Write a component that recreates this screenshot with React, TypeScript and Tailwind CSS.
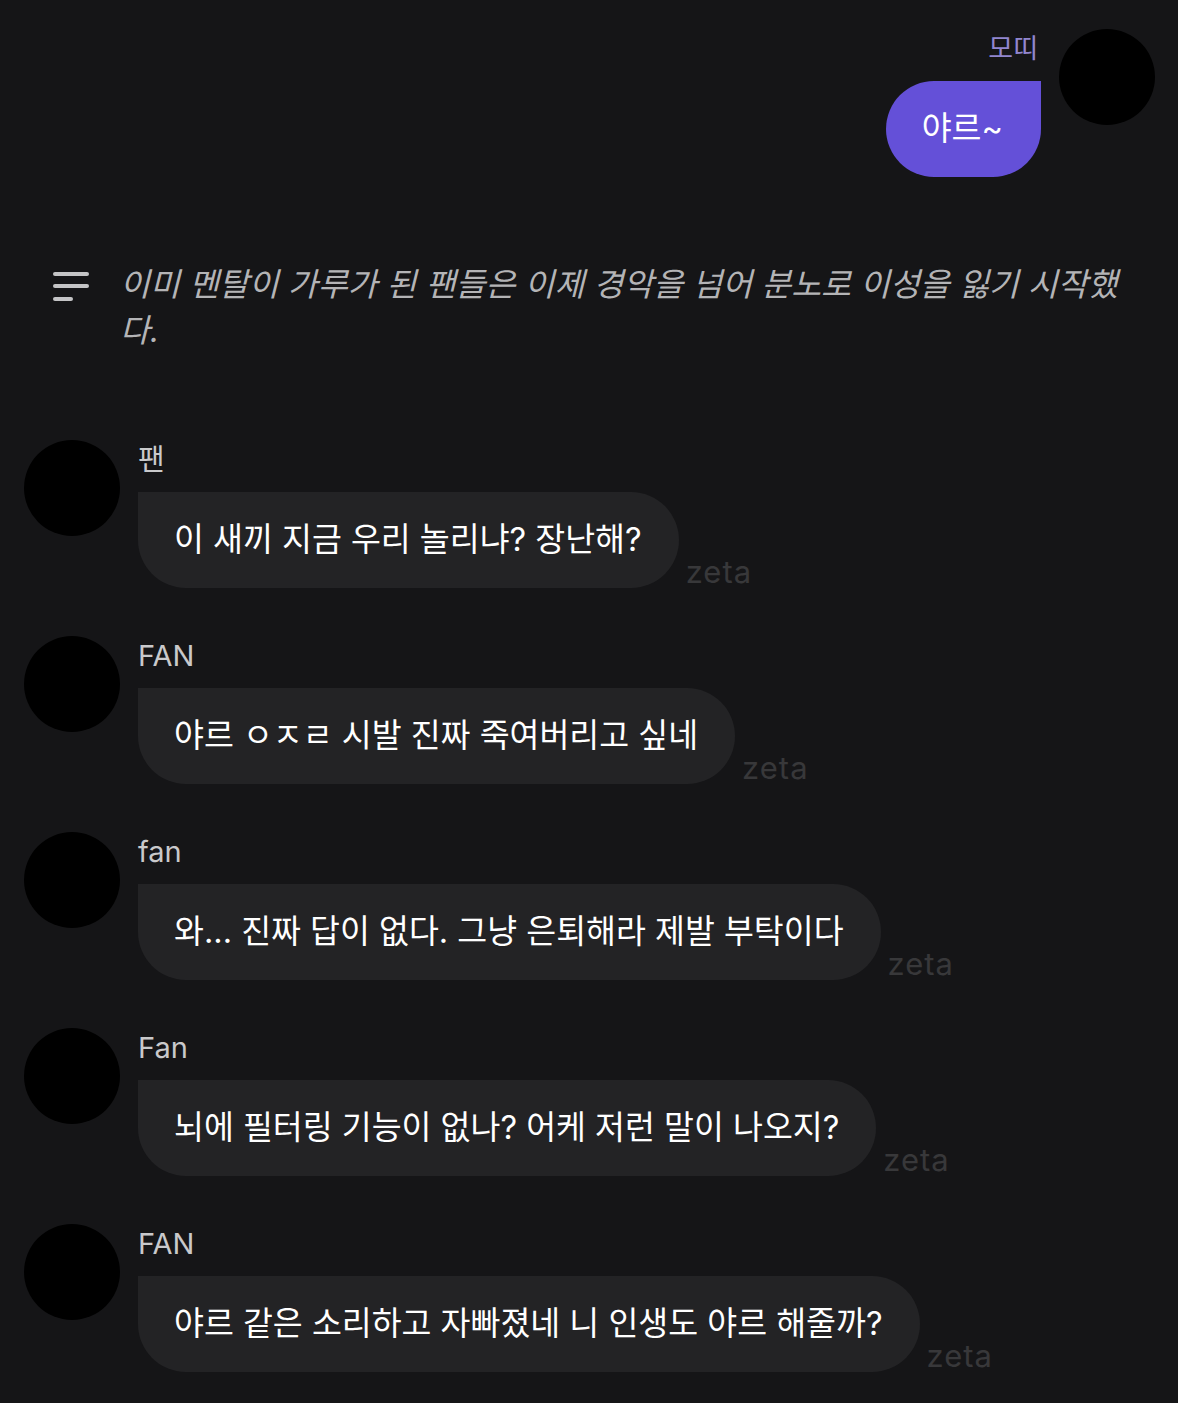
import React from "react"

interface Message {
  name: string
  text: string
}

const messages: Message[] = [
  { name: "팬", text: "이 새끼 지금 우리 놀리냐? 장난해?" },
  { name: "FAN", text: "야르 ㅇㅈㄹ 시발 진짜 죽여버리고 싶네" },
  { name: "fan", text: "와... 진짜 답이 없다. 그냥 은퇴해라 제발 부탁이다" },
  { name: "Fan", text: "뇌에 필터링 기능이 없나? 어케 저런 말이 나오지?" },
  { name: "FAN", text: "야르 같은 소리하고 자빠졌네 니 인생도 야르 해줄까?" },
]

const font = { fontFamily: "Inter, 'Noto Sans CJK KR', sans-serif" }

function MenuIcon() {
  return (
    <svg width="38" height="32" viewBox="0 0 38 32" className="shrink-0">
      <line x1="3" y1="3" x2="35" y2="3" stroke="#c4c4c6" strokeWidth="4" strokeLinecap="round" />
      <line x1="3" y1="15" x2="35" y2="15" stroke="#c4c4c6" strokeWidth="4" strokeLinecap="round" />
      <line x1="3" y1="28" x2="19" y2="28" stroke="#c4c4c6" strokeWidth="4" strokeLinecap="round" />
    </svg>
  )
}

export default function App() {
  return (
    <div className="min-h-screen w-full bg-[#151517] pt-[29px] pb-10" style={font}>
      {/* my message */}
      <div className="flex justify-end gap-[18px] pr-[23px]">
        <div className="flex flex-col items-end">
          <div className="h-[40px] pr-[3px] text-[27px] leading-[40px] text-[#9186cf]">모띠</div>
          <div className="mt-[12px] rounded-[48px] rounded-tr-none bg-[#6450d8] py-[24px] pl-[36px] pr-[38px] text-[32.5px] leading-[48px] text-white">
            야르~
          </div>
        </div>
        <div className="h-[96px] w-[96px] shrink-0 rounded-full bg-black" />
      </div>

      {/* narration */}
      <div className="mt-[85px] flex gap-[30px] pl-[52px] pr-[50px]">
        <div className="pt-[9px]">
          <MenuIcon />
        </div>
        <p className="text-[32.5px] italic leading-[46px] text-[#b4b4b6]">
          이미 멘탈이 가루가 된 팬들은 이제 경악을 넘어 분노로 이성을 잃기 시작했다.
        </p>
      </div>

      {/* fan messages */}
      <div className="mt-[86px] flex flex-col gap-[48px] pl-[24px]">
        {messages.map((m, i) => (
          <div key={i} className="flex gap-[18px]">
            <div className="h-[96px] w-[96px] shrink-0 rounded-full bg-black" />
            <div className="flex flex-col items-start">
              <div className="h-[40px] text-[29px] leading-[40px] text-[#c9c9cb]">{m.name}</div>
              <div className="mt-[12px] flex items-end gap-[7px]">
                <div className="rounded-[48px] rounded-tl-none bg-[#232325] py-[24px] pl-[36px] pr-[37px] text-[32.5px] leading-[48px] text-white">
                  {m.text}
                </div>
                <span className="-mb-[2px] text-[31px] leading-[36px] tracking-[1px] text-[#38383a]">zeta</span>
              </div>
            </div>
          </div>
        ))}
      </div>
    </div>
  )
}
